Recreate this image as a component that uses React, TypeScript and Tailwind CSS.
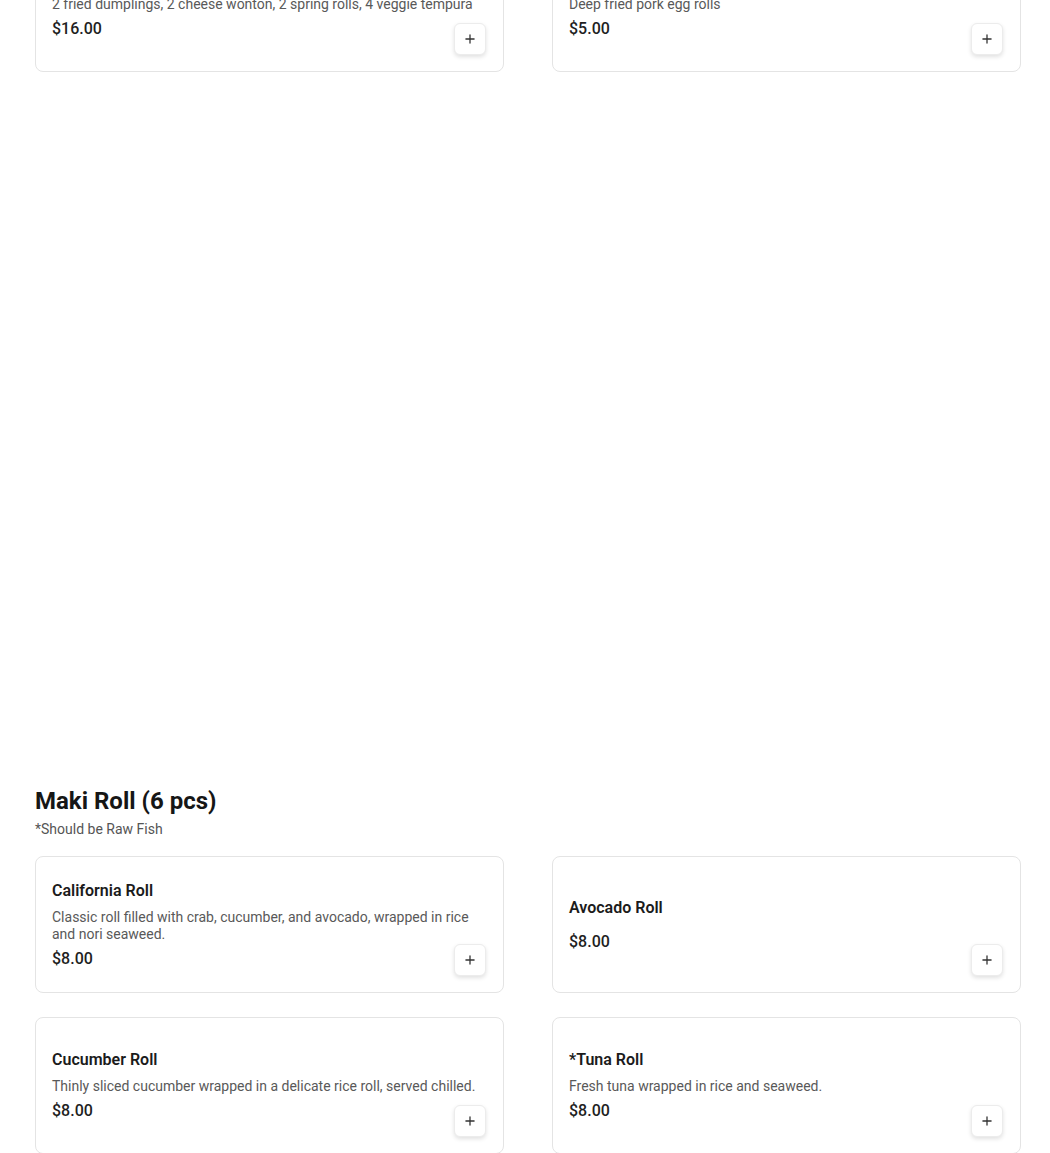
import { Plus } from "lucide-react";

type Item = { name: string; desc?: string; price: string };

const appetizers: Item[] = [
  { name: "Appetizer Combo", desc: "2 fried dumplings, 2 cheese wonton, 2 spring rolls, 4 veggie tempura", price: "$16.00" },
  { name: "Egg Rolls", desc: "Deep fried pork egg rolls", price: "$5.00" },
];

const maki: Item[] = [
  { name: "California Roll", desc: "Classic roll filled with crab, cucumber, and avocado, wrapped in rice and nori seaweed.", price: "$8.00" },
  { name: "Avocado Roll", price: "$8.00" },
  { name: "Cucumber Roll", desc: "Thinly sliced cucumber wrapped in a delicate rice roll, served chilled.", price: "$8.00" },
  { name: "*Tuna Roll", desc: "Fresh tuna wrapped in rice and seaweed.", price: "$8.00" },
];

function MenuCard({ item }: { item: Item }) {
  return (
    <div className="relative flex min-h-[137px] flex-col justify-center rounded-lg border border-[#e4e4e4] bg-white px-4 py-5">
      <div className="text-[16px] font-semibold leading-5 text-[#1b1b1b]">{item.name}</div>
      <div className="mt-2 text-[14px] leading-[17px] text-[#595959]">{item.desc}</div>
      <div className="mt-1.5 text-[16px] font-medium leading-5 text-[#1f1f1f]">{item.price}</div>
      <button
        type="button"
        className="absolute bottom-4 right-[17px] flex h-8 w-8 items-center justify-center rounded-md border border-[#ececec] bg-white text-[#333] shadow-[0_2px_4px_rgba(0,0,0,0.12)]"
      >
        <Plus className="h-3.5 w-3.5" strokeWidth={2.2} />
      </button>
    </div>
  );
}

export default function App() {
  return (
    <div className="min-h-[1153px] overflow-hidden bg-white font-['Roboto',sans-serif]">
      <div className="ml-[35px] w-[986px]">
        <div className="-mt-[65px] grid grid-cols-2 gap-x-12 gap-y-6">
          {appetizers.map((item) => (
            <MenuCard key={item.name} item={item} />
          ))}
        </div>

        <div className="mt-[713px]">
          <h2 className="text-[24px] font-bold leading-8 text-[#161616]">Maki Roll (6 pcs)</h2>
          <p className="mt-0.5 text-[14px] leading-5 text-[#555]">*Should be Raw Fish</p>
        </div>

        <div className="mt-[17px] grid grid-cols-2 gap-x-12 gap-y-6">
          {maki.map((item) => (
            <MenuCard key={item.name} item={item} />
          ))}
        </div>
      </div>
    </div>
  );
}
